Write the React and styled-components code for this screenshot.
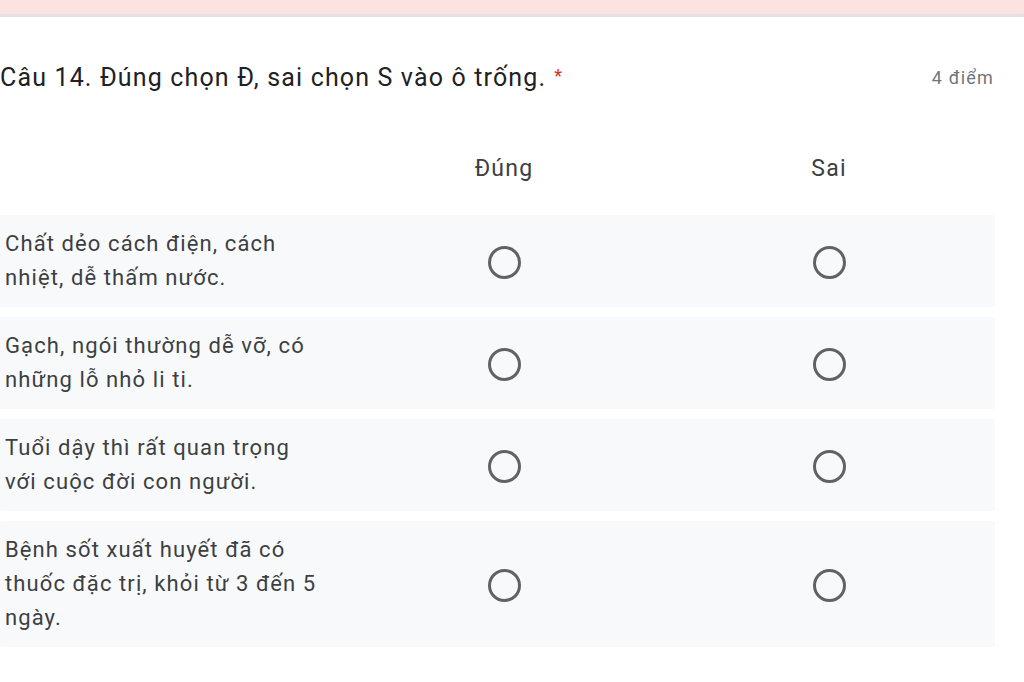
import React from "react";
import styled, { createGlobalStyle } from "styled-components";

const Global = createGlobalStyle`
  html, body { margin: 0; padding: 0; background: #fff; }
  body { font-family: Roboto, "Noto Sans", Arial, sans-serif; color: #202124; overflow: hidden; }
`;

const Page = styled.div`
  width: 1024px;
  height: 682px;
  overflow: hidden;
  background: #fff;
`;

const TopBand = styled.div`
  height: 14px;
  background: linear-gradient(#fde2e2, #fbe3e1);
  border-bottom: 3px solid #e6dfe0;
`;

const Card = styled.div`
  padding: 44px 30px 0 0;
`;

const QuestionHeader = styled.div`
  display: flex;
  justify-content: space-between;
  align-items: center;
  height: 32px;
`;

const Title = styled.div`
  font-size: 25px;
  letter-spacing: 1.15px;
  line-height: 32px;
  color: #202124;
  white-space: nowrap;
`;

const Required = styled.span`
  color: #d93025;
  margin-left: 8px;
  font-size: 18px;
  vertical-align: 4px;
`;

const Points = styled.div`
  font-size: 18px;
  letter-spacing: 1.2px;
  color: #70757a;
`;

const Grid = styled.div`
  display: flex;
  flex-direction: column;
  gap: 10px;
  margin-top: 60px;
  width: 995px;
`;

const Row = styled.div`
  display: grid;
  grid-template-columns: 340px 328px 322px;
  align-items: center;
  padding: ${(p) => (p.$head ? "0" : "12px 5px 12px 0")};
  background: ${(p) => (p.$head ? "transparent" : "#f8f9fa")};
  border-radius: 2px;
  margin-bottom: ${(p) => (p.$head ? "20px" : "0")};
`;

const Label = styled.div`
  padding-left: 5px;
  font-size: 22px;
  letter-spacing: 1.1px;
  line-height: 34px;
  color: #3c4043;
  width: 318px;
`;

const ColHead = styled.div`
  text-align: center;
  font-size: 23px;
  letter-spacing: 1.2px;
  line-height: 32px;
  color: #3c4043;
`;

const Cell = styled.div`
  display: flex;
  justify-content: center;
  align-items: center;
`;

const Radio = styled.div`
  width: 27px;
  height: 27px;
  border: 3px solid #5f6368;
  border-radius: 50%;
  margin-top: 2px;
`;

const items = [
  "Chất dẻo cách điện, cách nhiệt, dễ thấm nước.",
  "Gạch, ngói thường dễ vỡ, có những lỗ nhỏ li ti.",
  "Tuổi dậy thì rất quan trọng với cuộc đời con người.",
  "Bệnh sốt xuất huyết đã có thuốc đặc trị, khỏi từ 3 đến 5 ngày.",
];

export default function App() {
  return (
    <Page>
      <Global />
      <TopBand />
      <Card>
        <QuestionHeader>
          <Title>
            Câu 14. Đúng chọn Đ, sai chọn S vào ô trống.<Required>*</Required>
          </Title>
          <Points>4 điểm</Points>
        </QuestionHeader>
        <Grid>
          <Row $head>
            <div />
            <ColHead>Đúng</ColHead>
            <ColHead>Sai</ColHead>
          </Row>
          {items.map((t) => (
            <Row key={t}>
              <Label>{t}</Label>
              <Cell><Radio /></Cell>
              <Cell><Radio /></Cell>
            </Row>
          ))}
        </Grid>
      </Card>
    </Page>
  );
}
